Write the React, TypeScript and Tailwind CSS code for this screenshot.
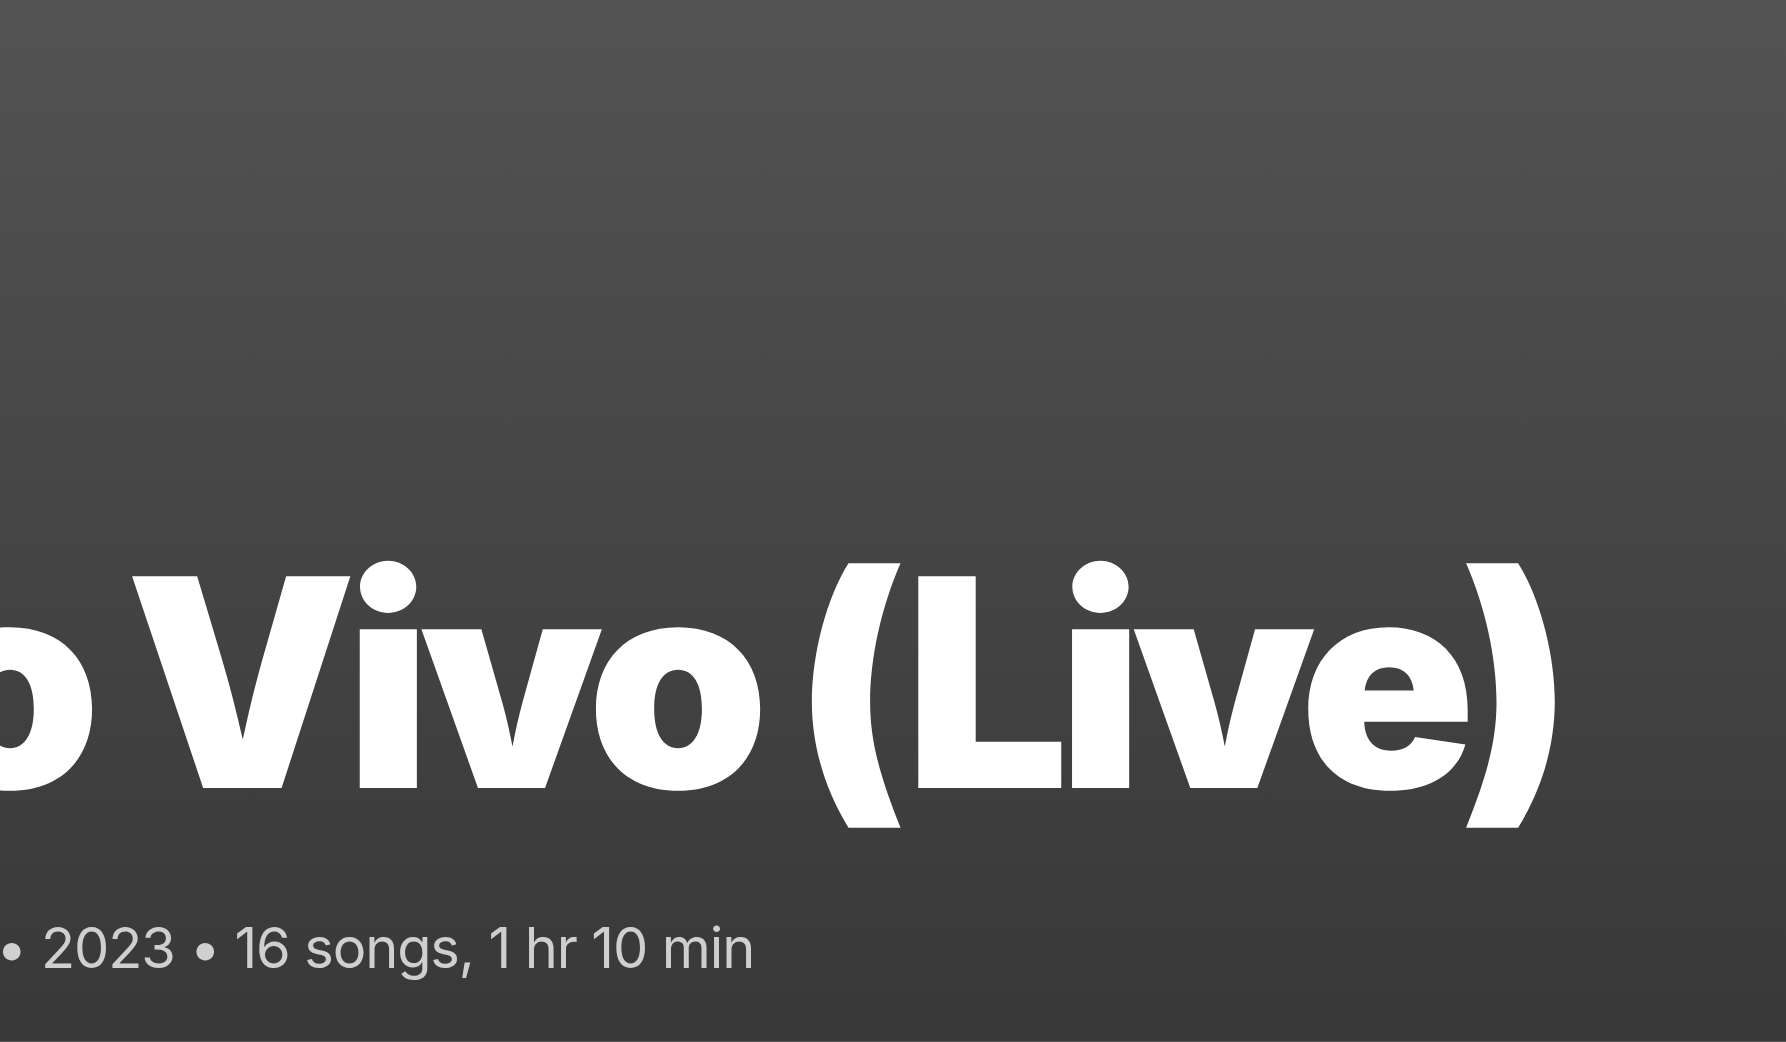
export default function App() {
  return (
    <div className="h-[1042px] w-full overflow-hidden bg-gradient-to-b from-[#535353] to-[#383838] border-b border-[#5a5a5a] flex flex-col justify-end pb-[65px] font-['Inter',sans-serif]">
      <h1 className="ml-[-81px] whitespace-nowrap text-[291px] font-black leading-none tracking-[-0.04em] [word-spacing:-10px] text-white">
        o Vivo (Live)
      </h1>
      <div className="mt-[92px] ml-[-4px] whitespace-nowrap text-[56px] leading-none tracking-[-0.02em] text-[#cfcfcf]">
        • 2023 • 16 songs, 1 hr 10 min
      </div>
    </div>
  );
}
